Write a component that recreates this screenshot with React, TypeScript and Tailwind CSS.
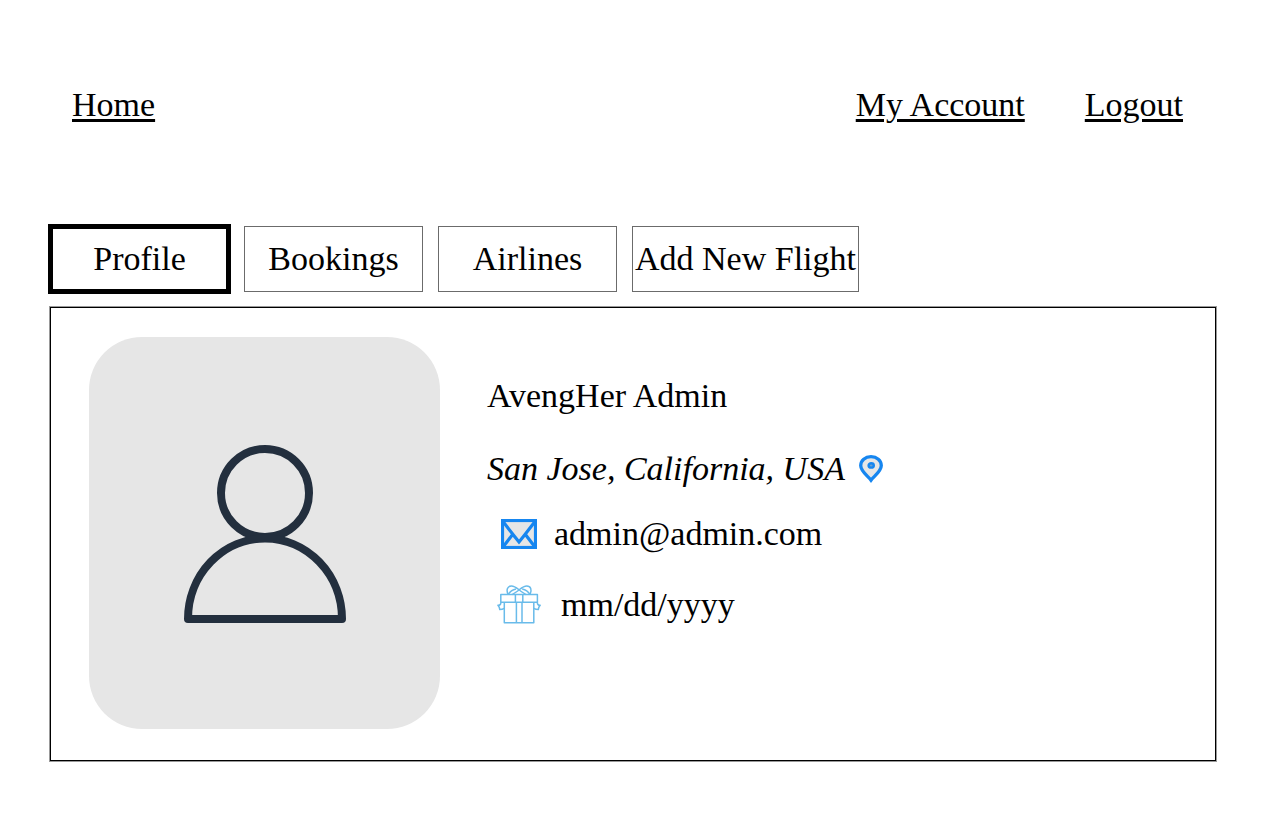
import React, { useState } from "react";

const tabs = ["Profile", "Bookings", "Airlines", "Add New Flight"];

function PersonIcon() {
  return (
    <svg width="162" height="178" viewBox="0 0 162 178" fill="none" stroke="#232f3e" strokeWidth="8" strokeLinejoin="round" aria-hidden="true">
      <circle cx="81" cy="48" r="44" />
      <path d="M4 174A77 80.5 0 0 1 158 174Z" />
    </svg>
  );
}

function PinIcon() {
  return (
    <svg width="24" height="28" viewBox="0 0 24 28" aria-hidden="true">
      <path
        d="M12 25.2C9 21.2 1.7 16.5 1.7 10.6C1.7 5.4 6.2 1.7 12 1.7S22.3 5.4 22.3 10.6C22.3 16.5 15 21.2 12 25.2Z"
        fill="#e6e6e6"
        stroke="#1686f0"
        strokeWidth="3.3"
      />
      <ellipse cx="12.2" cy="10.4" rx="2.6" ry="2.2" fill="#6f9fce" stroke="#1686f0" strokeWidth="2.4" />
    </svg>
  );
}

function MailIcon() {
  return (
    <svg width="36" height="30" viewBox="0 0 36 30" fill="none" stroke="#1686f0" strokeWidth="3.2" aria-hidden="true">
      <rect x="1.5" y="1.5" width="33" height="27" fill="#e6e6e6" />
      <path d="M2 2.5L12 15.5L18 23L24 15.5L34 2.5M2 28L12 15M34 28L24 15" />
    </svg>
  );
}

function GiftIcon() {
  return (
    <svg width="44" height="40" viewBox="0 0 44 40" fill="none" stroke="#69bbea" strokeWidth="1.5" strokeLinejoin="round" aria-hidden="true">
      <path d="M3.8 9.6H40.4V17.2H3.8ZM18.4 9.6V17.2M25.8 9.6V17.2" />
      <path d="M7.3 17.2V37.8H36.8V17.2M19.4 17.2V37.8M25 17.2V37.8" />
      <path d="M3.8 17.2C4 19.4 2.8 20.4 .9 20.2C2.2 21.4 2.6 22.4 2.8 24.6C4.6 24.6 6 24.2 7.3 23.4M40.4 17.2C40.2 19.4 41.4 20.4 43.2 20.2C41.9 21.4 41.5 22.4 41.3 24.6C39.5 24.6 38.1 24.2 36.8 23.4" />
      <path d="M11.2 9.6C8.8 4.6 10.6 1 14.4 1C18.4 1 20.6 4 25 7C27 8.4 28 9 29 9.6" />
      <path d="M33 9.6C35.4 4.6 33.6 1 29.8 1C25.8 1 23.6 4 19.2 7C17.2 8.4 16.2 9 15.2 9.6" />
      <path d="M11.2 9.6C13 6.4 15.4 4.6 19 4M33 9.6C31.2 6.4 28.8 4.6 25.2 4" />
    </svg>
  );
}

export default function App() {
  const [active, setActive] = useState("Profile");
  const link = "underline decoration-3 underline-offset-3";

  return (
    <div className="min-h-screen bg-white pb-15 font-['Liberation_Serif',serif] text-[34px] leading-10 text-black">
      <nav className="flex justify-between pt-[85px] pr-[87px] pl-18">
        <a href="#home" className={link}>Home</a>
        <div className="flex gap-15">
          <a href="#account" className={link}>My Account</a>
          <a href="#logout" className={link}>Logout</a>
        </div>
      </nav>

      <main className="mt-[101px] mr-[54px] ml-[50px]">
        <div role="tablist" className="flex gap-[15px]">
          {tabs.map((tab) => (
            <button
              key={tab}
              type="button"
              role="tab"
              aria-selected={active === tab}
              onClick={() => setActive(tab)}
              className={
                "h-[66px] min-w-[179px] cursor-pointer border px-0.5 whitespace-nowrap " +
                (active === tab ? "border-black outline-5 -outline-offset-3 outline-black" : "border-[#6b6b6b]")
              }
            >
              {tab}
            </button>
          ))}
        </div>

        <section className="mt-[15px] flex gap-[47px] border border-black pt-[29px] pb-[31px] pl-[38px] ring-1 ring-[#999999]">
          <div className="flex h-[392px] w-[351px] shrink-0 items-center justify-center rounded-[53px] bg-[#e6e6e6] pt-0.5">
            <PersonIcon />
          </div>
          <div className="flex flex-col pt-[39px]">
            <h1>AvengHer Admin</h1>
            <div className="mt-[33px] flex items-center gap-3.5">
              <address>San Jose, California, USA</address>
              <PinIcon />
            </div>
            <div className="mt-[25px] flex items-center gap-[17px] pl-3.5">
              <MailIcon />
              <span>admin@admin.com</span>
            </div>
            <div className="mt-[31px] flex items-center gap-5 pl-2.5">
              <GiftIcon />
              <span>mm/dd/yyyy</span>
            </div>
          </div>
        </section>
      </main>
    </div>
  );
}
